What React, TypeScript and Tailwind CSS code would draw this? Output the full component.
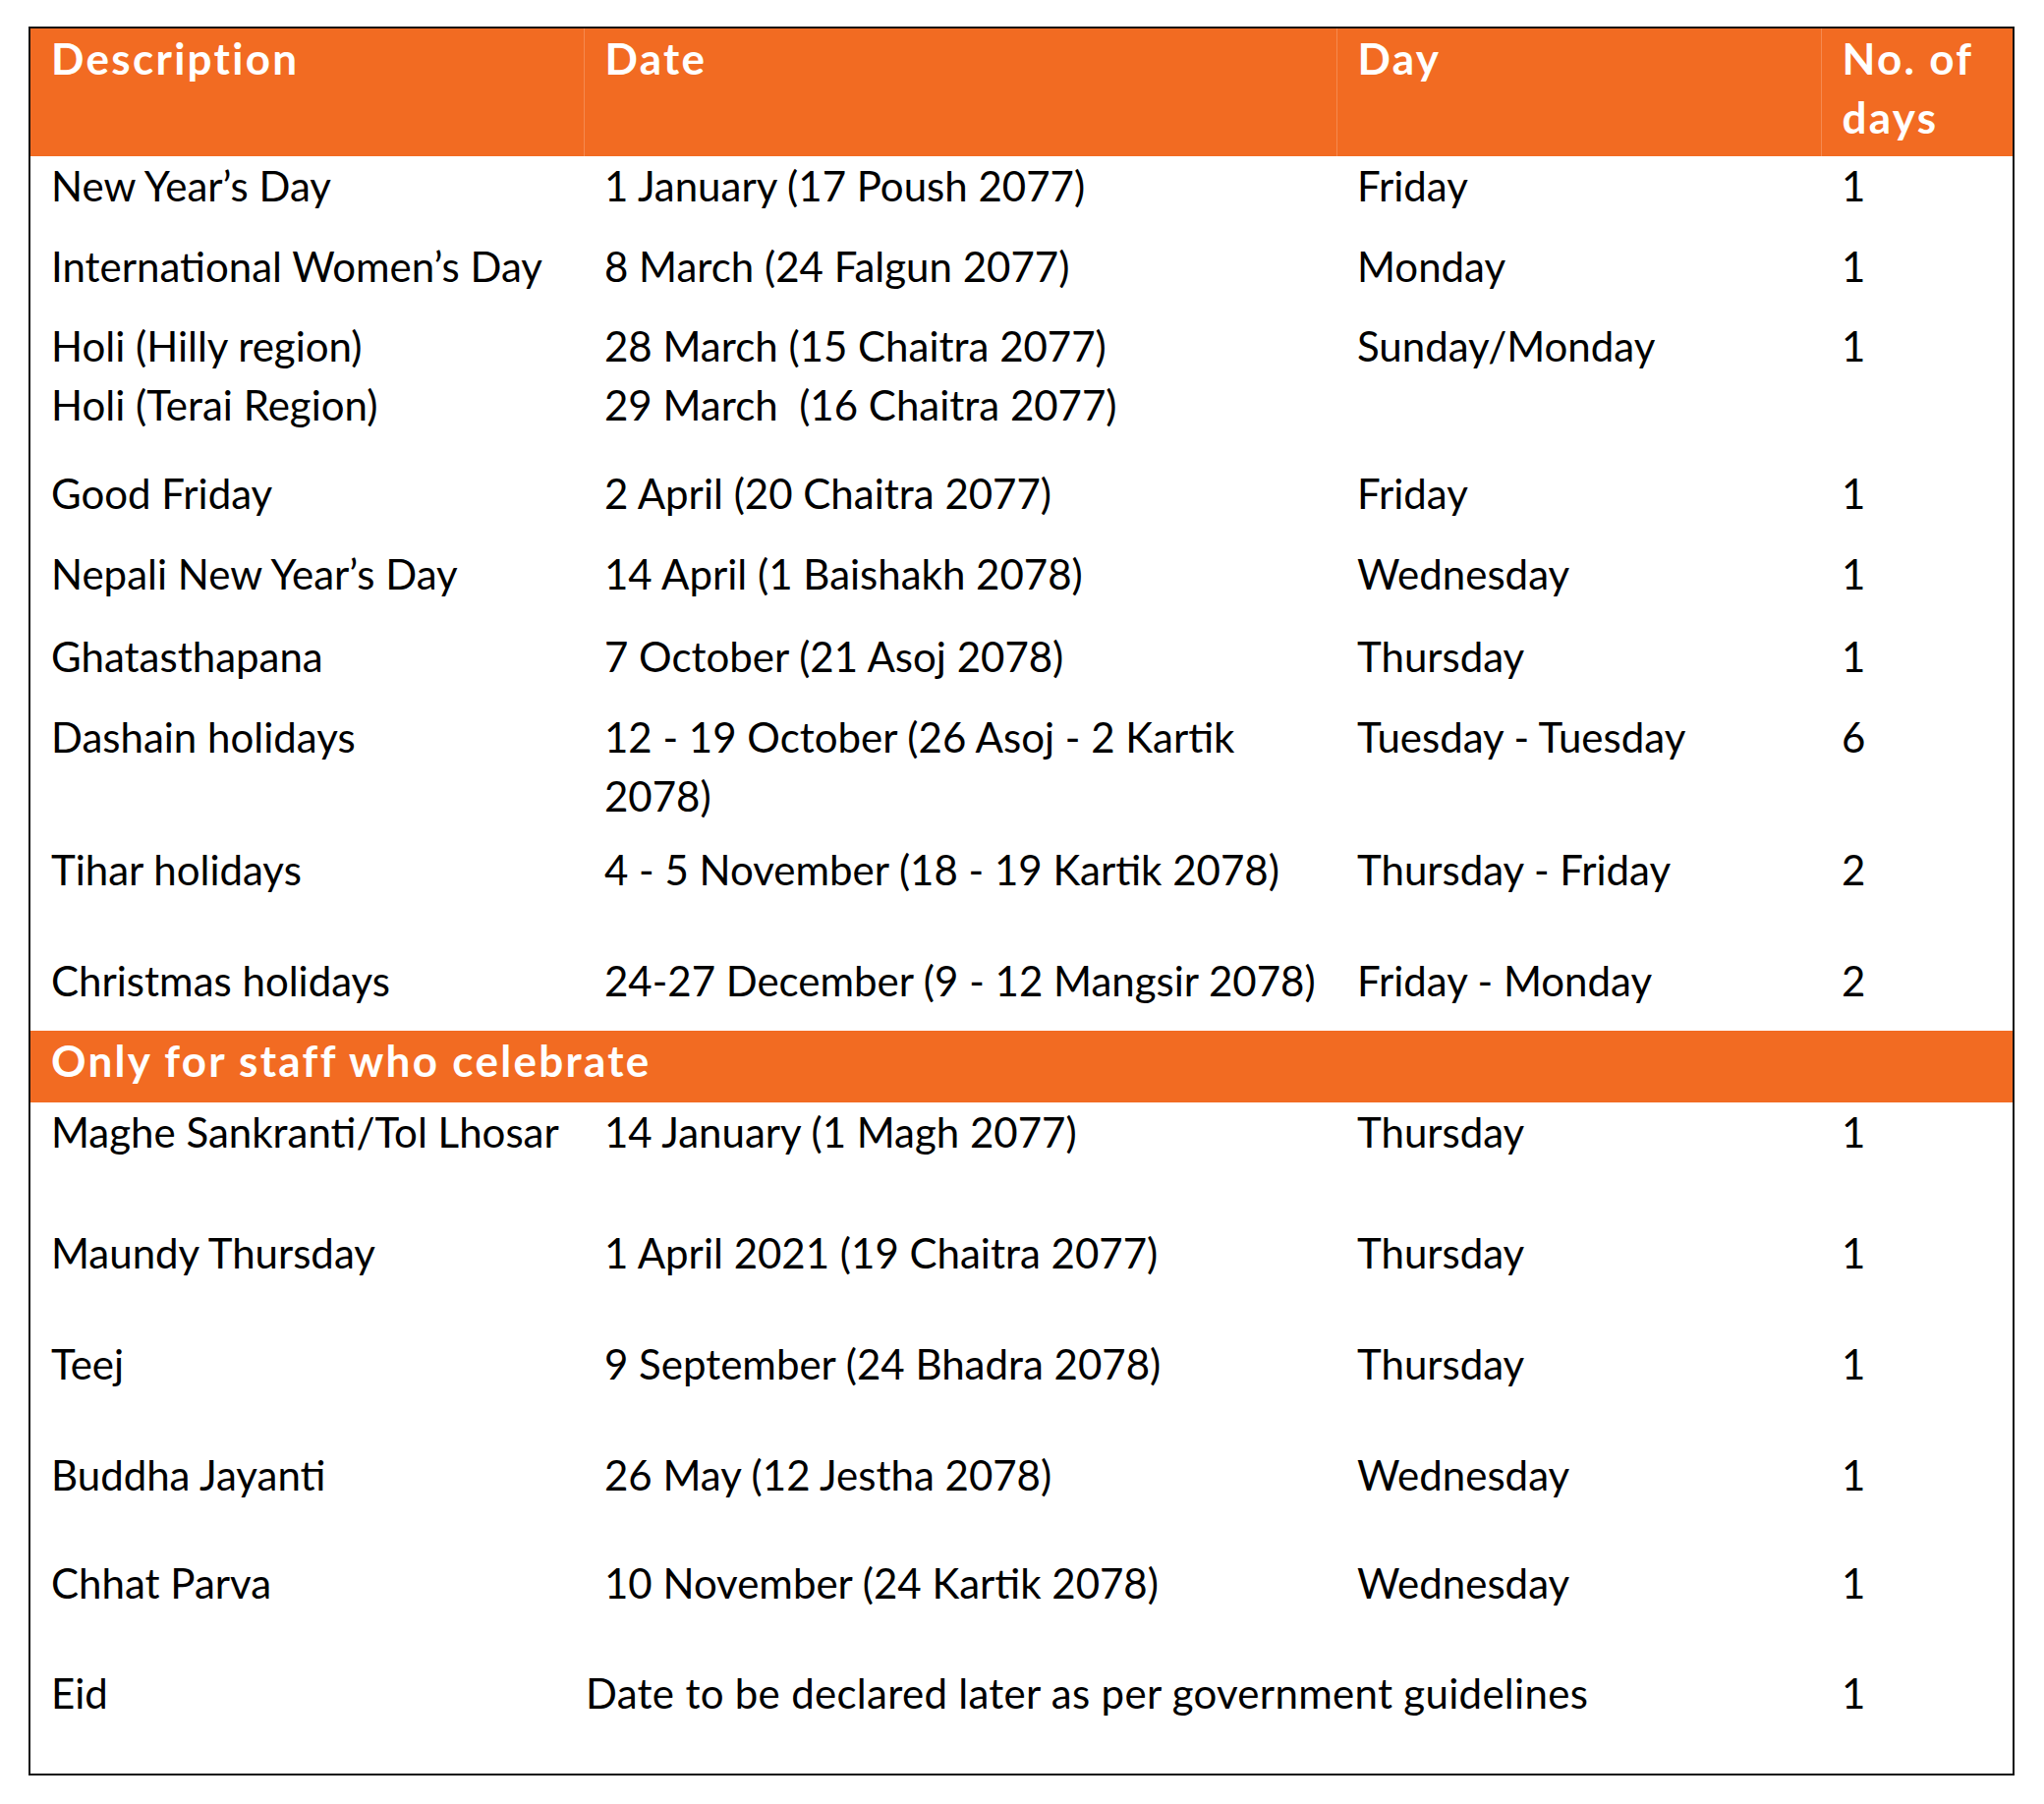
import React from 'react';

type Row = {
    desc: string[];
    date: string[];
    day: string;
    days: string;
    h: string;
};

const publicHolidays: Row[] = [
    { desc: ['New Year’s Day'], date: ['1 January (17 Poush 2077)'], day: 'Friday', days: '1', h: 'h-[82px]' },
    { desc: ['International Women’s Day'], date: ['8 March (24 Falgun 2077)'], day: 'Monday', days: '1', h: 'h-[81px]' },
    {
        desc: ['Holi (Hilly region)', 'Holi (Terai Region)'],
        date: ['28 March (15 Chaitra 2077)', '29 March  (16 Chaitra 2077)'],
        day: 'Sunday/Monday',
        days: '1',
        h: 'h-[150px]',
    },
    { desc: ['Good Friday'], date: ['2 April (20 Chaitra 2077)'], day: 'Friday', days: '1', h: 'h-[82px]' },
    { desc: ['Nepali New Year’s Day'], date: ['14 April (1 Baishakh 2078)'], day: 'Wednesday', days: '1', h: 'h-[84px]' },
    { desc: ['Ghatasthapana'], date: ['7 October (21 Asoj 2078)'], day: 'Thursday', days: '1', h: 'h-[82px]' },
    {
        desc: ['Dashain holidays'],
        date: ['12 - 19 October (26 Asoj - 2 Kartik', '2078)'],
        day: 'Tuesday - Tuesday',
        days: '6',
        h: 'h-[135px]',
    },
    { desc: ['Tihar holidays'], date: ['4 - 5 November (18 - 19 Kartik 2078)'], day: 'Thursday - Friday', days: '2', h: 'h-[113px]' },
    { desc: ['Christmas holidays'], date: ['24-27 December (9 - 12 Mangsir 2078)'], day: 'Friday - Monday', days: '2', h: 'h-[81px]' },
];

const optionalHolidays: Row[] = [
    { desc: ['Maghe Sankranti/Tol Lhosar'], date: ['14 January (1 Magh 2077)'], day: 'Thursday', days: '1', h: 'h-[123px]' },
    { desc: ['Maundy Thursday'], date: ['1 April 2021 (19 Chaitra 2077)'], day: 'Thursday', days: '1', h: 'h-[113px]' },
    { desc: ['Teej'], date: ['9 September (24 Bhadra 2078)'], day: 'Thursday', days: '1', h: 'h-[113px]' },
    { desc: ['Buddha Jayanti'], date: ['26 May (12 Jestha 2078)'], day: 'Wednesday', days: '1', h: 'h-[110px]' },
    { desc: ['Chhat Parva'], date: ['10 November (24 Kartik 2078)'], day: 'Wednesday', days: '1', h: 'h-[112px]' },
];

const cell = 'align-top pl-[21px] pr-2 p-0 whitespace-pre';
const headCell = 'align-top pl-[21px] p-0 text-left text-[44px] font-bold tracking-[2.3px]';

const HolidayRow: React.FC<{ row: Row }> = ({ row }) => (
    <tr className={row.h}>
        <td className={cell}>
            {row.desc.map((d) => (
                <div key={d}>{d}</div>
            ))}
        </td>
        <td className={cell}>
            {row.date.map((d) => (
                <div key={d}>{d}</div>
            ))}
        </td>
        <td className={cell}>{row.day}</td>
        <td className={cell}>{row.days}</td>
    </tr>
);

export default function App() {
    return (
        <div className="min-h-[1836px] bg-white pt-[27px] pl-[29px] font-['Lato',sans-serif] text-[42px] leading-[60px] text-black">
            <div className="w-[2021px] border-2 border-[#111]">
                <table className="w-full table-fixed border-collapse">
                    <colgroup>
                        <col className="w-[563px]" />
                        <col className="w-[766px]" />
                        <col className="w-[493px]" />
                        <col className="w-[195px]" />
                    </colgroup>
                    <thead>
                        <tr className="h-[130px] bg-[#f26b22] text-white">
                            <th className={`${headCell} border-r border-[#f58a50]`}>Description</th>
                            <th className={`${headCell} border-r border-[#f58a50]`}>Date</th>
                            <th className={`${headCell} border-r border-[#f58a50]`}>Day</th>
                            <th className={headCell}>
                                No. of
                                <br />
                                days
                            </th>
                        </tr>
                    </thead>
                    <tbody>
                        {publicHolidays.map((row) => (
                            <HolidayRow key={row.desc[0]} row={row} />
                        ))}
                        <tr className="h-[73px] bg-[#f26b22]">
                            <td colSpan={4} className="align-top pl-[21px] p-0 text-[44px] font-bold tracking-[2.3px] text-white">
                                Only for staff who celebrate
                            </td>
                        </tr>
                        {optionalHolidays.map((row) => (
                            <HolidayRow key={row.desc[0]} row={row} />
                        ))}
                        <tr className="h-[112px]">
                            <td className={cell}>Eid</td>
                            <td colSpan={2} className="align-top pl-[2px] p-0 whitespace-pre tracking-[0.3px]">
                                Date to be declared later as per government guidelines
                            </td>
                            <td className={cell}>1</td>
                        </tr>
                    </tbody>
                </table>
            </div>
        </div>
    );
}
